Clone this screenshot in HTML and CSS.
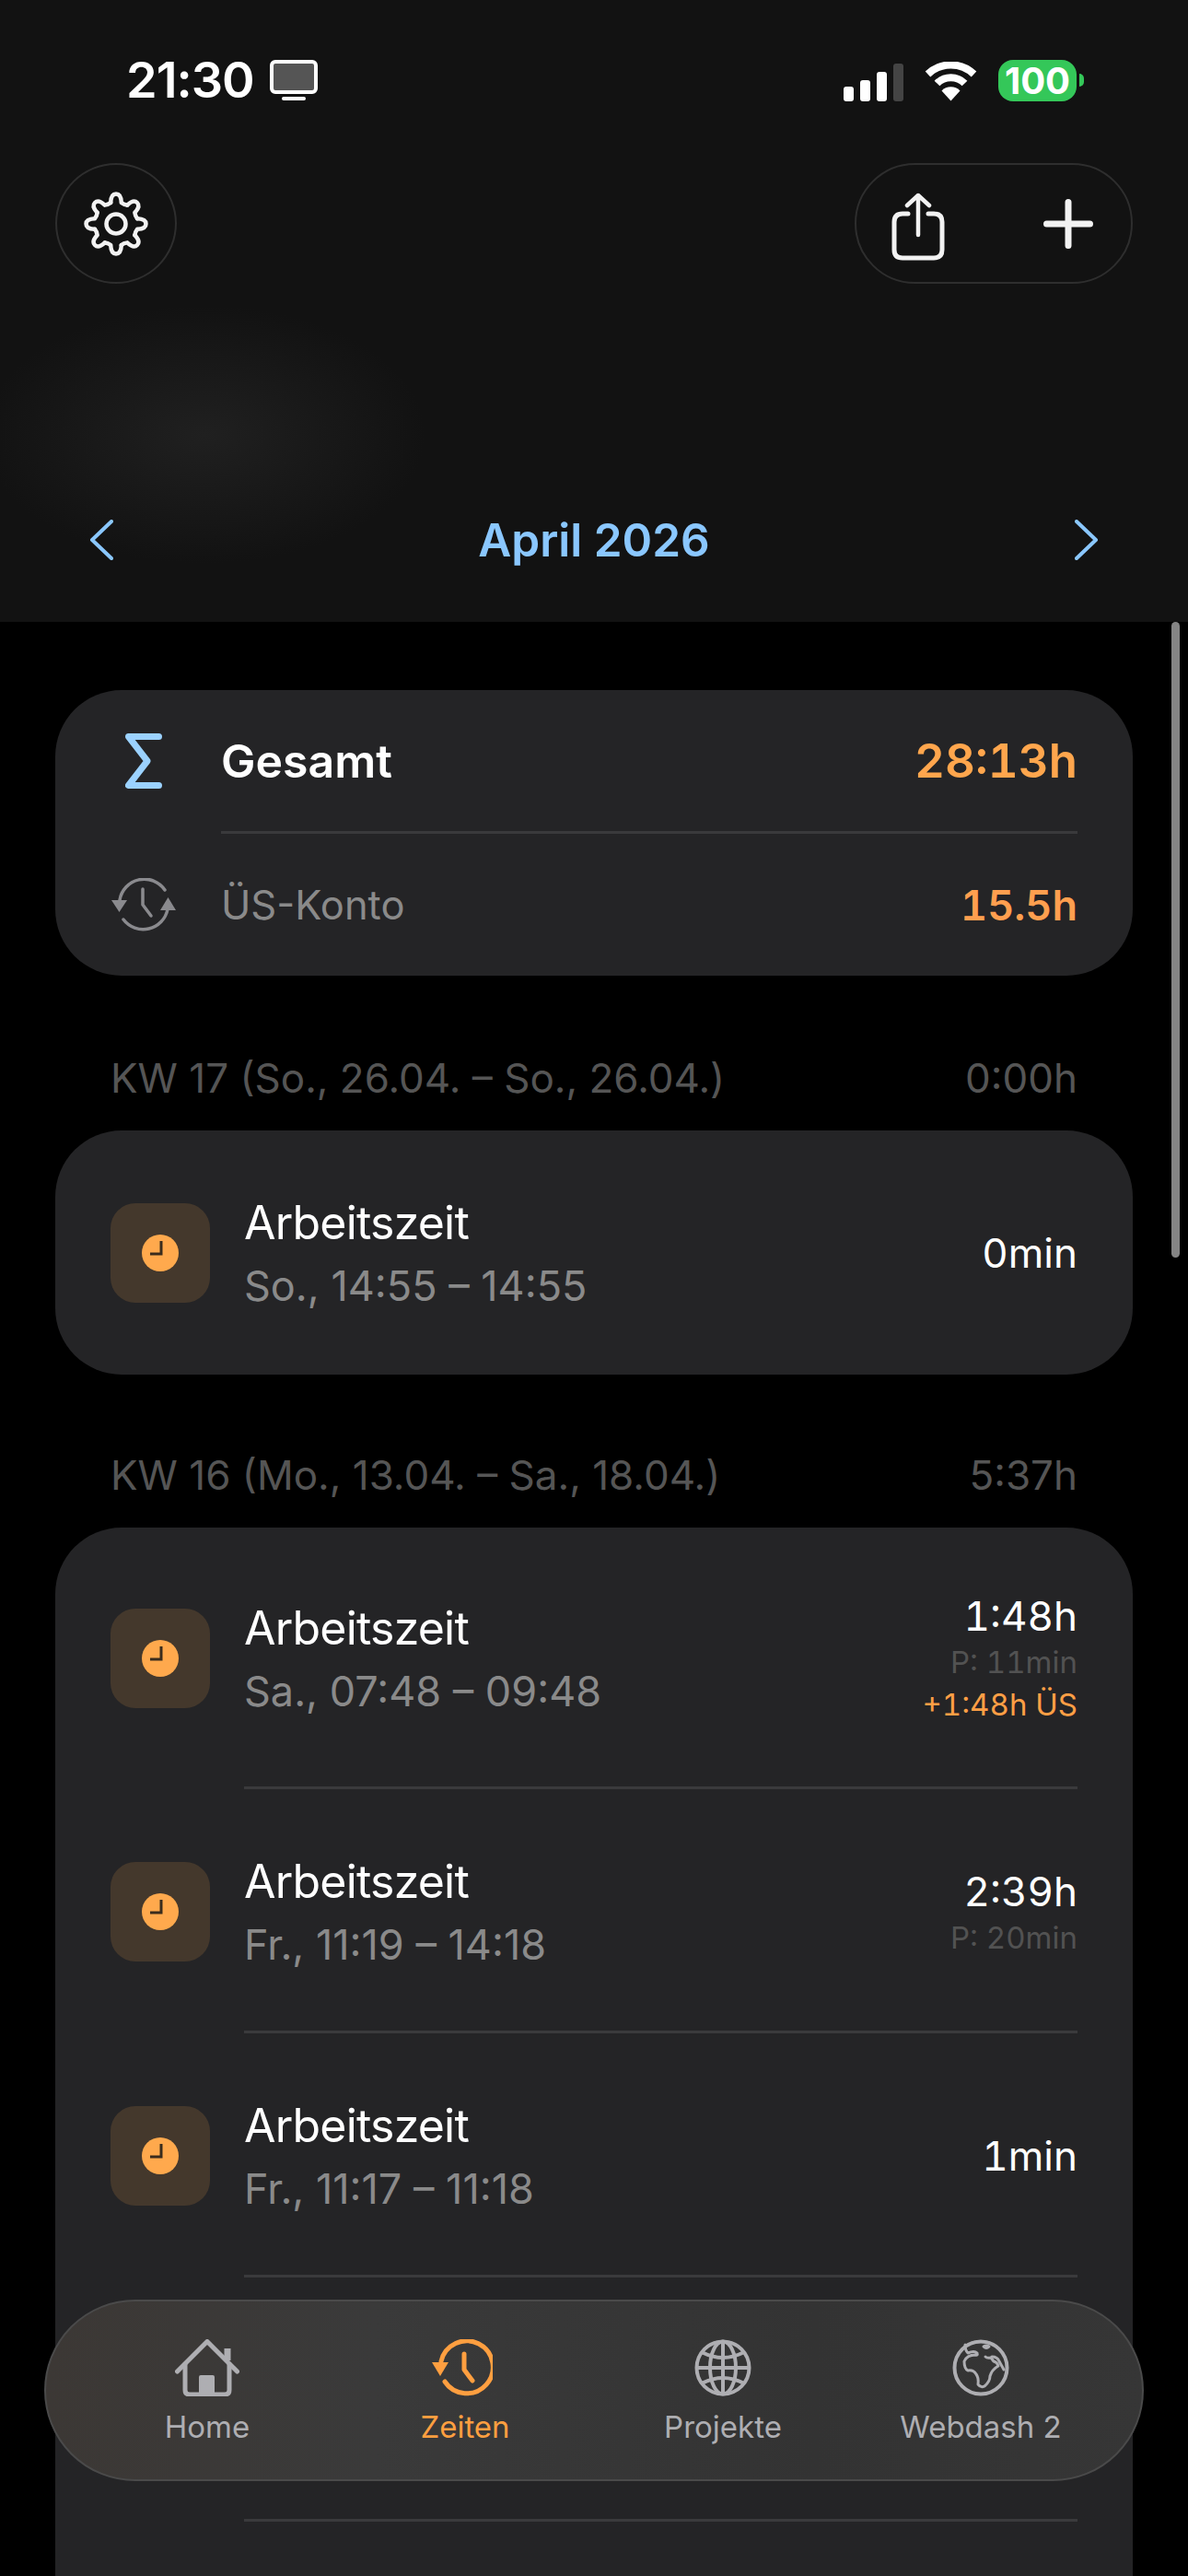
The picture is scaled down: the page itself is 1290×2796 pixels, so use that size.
FILE: index.html
```html
<!DOCTYPE html>
<html lang="de">
<head>
    <meta charset="UTF-8">
    <meta name="viewport" content="width=device-width, initial-scale=1.0">
    <title>Zeiten</title>
    <link rel="stylesheet" href="styles.css">
</head>
<body>
<div class="screen">
    <header class="top">
        <div class="status">
            <div class="status-left">
                <span class="clock">21:30</span>
                <svg class="monitor" width="52" height="45" viewBox="0 0 52 45">
                    <rect x="2" y="2" width="48" height="33" rx="4" fill="#555" stroke="#fff" stroke-width="4"/>
                    <rect x="13" y="40" width="26" height="4" rx="2" fill="#fff"/>
                </svg>
            </div>
            <div class="status-right">
                <div class="signal">
                    <i class="bar b1"></i><i class="bar b2"></i><i class="bar b3"></i><i class="bar b4"></i>
                </div>
                <svg class="wifi" width="57" height="43" viewBox="0 0 57 43" fill="none" stroke="#fff" stroke-width="8">
                    <path d="M3.500 13.500A36 36 0 0 1 53.500 13.500"/>
                    <path d="M13.500 23.500A21 21 0 0 1 43.500 23.500"/>
                    <path d="M28.500 42.500L18.500 31.500A14 14 0 0 1 38.500 31.500Z" fill="#fff" stroke="none"/>
                </svg>
                <div class="battery"><span class="battery-body">100</span><i class="battery-cap"></i></div>
            </div>
        </div>

        <div class="actions">
            <button class="glass round">
                <svg width="70" height="70" viewBox="-35 -35 70 70" fill="none" stroke="#f2f2f2" stroke-width="4.500" stroke-linejoin="round" stroke-linecap="round">
                    <g id="tooth"><path d="M-5.800 -23Q-5.500 -32.500 0 -32.500Q5.500 -32.500 5.800 -23Q9 -20.500 12.200 -20.400"/></g>
                    <use href="#tooth" transform="rotate(45)"/>
                    <use href="#tooth" transform="rotate(90)"/>
                    <use href="#tooth" transform="rotate(135)"/>
                    <use href="#tooth" transform="rotate(180)"/>
                    <use href="#tooth" transform="rotate(225)"/>
                    <use href="#tooth" transform="rotate(270)"/>
                    <use href="#tooth" transform="rotate(315)"/>
                    <circle r="10.500"/>
                </svg>
            </button>
            <div class="glass pill">
                <svg width="58" height="74" viewBox="0 0 58 74" fill="none" stroke="#f2f2f2" stroke-linecap="round" stroke-linejoin="round">
                    <path d="M18 23H12Q3 23 3 32V62Q3 71 12 71H46Q55 71 55 62V32Q55 23 46 23H40" stroke-width="5"/>
                    <path d="M29 46V3M17 14L29 3L41 14" stroke-width="4.500"/>
                </svg>
                <svg width="54" height="54" viewBox="0 0 54 54" fill="none" stroke="#f2f2f2" stroke-width="7" stroke-linecap="round">
                    <path d="M27 3.500V50.500M3.500 27H50.500"/>
                </svg>
            </div>
        </div>

        <div class="month-nav">
            <svg width="26" height="44" viewBox="0 0 26 44" fill="none" stroke="#8ac7ff" stroke-width="4" stroke-linecap="round" stroke-linejoin="round"><path d="M24 2L3 22L24 42"/></svg>
            <span class="month">April 2026</span>
            <svg width="26" height="44" viewBox="0 0 26 44" fill="none" stroke="#8ac7ff" stroke-width="4" stroke-linecap="round" stroke-linejoin="round"><path d="M2 2L23 22L2 42"/></svg>
        </div>
    </header>

    <main class="content">
        <section class="card sum-card">
            <div class="sum-row first">
                <div class="sum-icon">
                    <svg width="40" height="60" viewBox="0 0 40 60" fill="none" stroke="#9bd2ff" stroke-width="7" stroke-linecap="round" stroke-linejoin="round"><path d="M36.500 3.500H3.500L24 30L3.500 56.500H36.500"/></svg>
                </div>
                <span class="sum-label">Gesamt</span>
                <span class="sum-value">28:13h</span>
            </div>
            <div class="sum-divider"></div>
            <div class="sum-row">
                <div class="sum-icon">
                    <svg width="70" height="58" viewBox="0 0 70 58" fill="none" stroke="#8a8a8e" stroke-width="3.500" stroke-linecap="round" stroke-linejoin="round">
                        <path d="M9 24A27 27 0 0 1 58 13"/>
                        <path d="M61 34A27 27 0 0 1 13 45"/>
                        <path d="M34 12V29L43 41"/>
                        <path d="M0 24H17L8.500 37Z" fill="#8a8a8e" stroke="none"/>
                        <path d="M53 35H70L61.500 21Z" fill="#8a8a8e" stroke="none"/>
                    </svg>
                </div>
                <span class="sum-label muted">ÜS-Konto</span>
                <span class="sum-value small">15.5h</span>
            </div>
        </section>

        <div class="week first"><span>KW 17 (So., 26.04. – So., 26.04.)</span><span>0:00h</span></div>
        <section class="card">
            <div class="entry">
                <div class="tile"><svg width="40" height="40" viewBox="0 0 40 40"><circle cx="20" cy="20" r="20" fill="#ffa94d"/><path d="M21 7V21H9" fill="none" stroke="#3a2c1d" stroke-width="3"/></svg></div>
                <div class="entry-text"><div class="entry-title">Arbeitszeit</div><div class="entry-sub">So., 14:55 – 14:55</div></div>
                <div class="entry-side"><div class="entry-time">0min</div></div>
            </div>
        </section>

        <div class="week"><span>KW 16 (Mo., 13.04. – Sa., 18.04.)</span><span>5:37h</span></div>
        <section class="card open">
            <div class="entry tall">
                <div class="tile"><svg width="40" height="40" viewBox="0 0 40 40"><circle cx="20" cy="20" r="20" fill="#ffa94d"/><path d="M21 7V21H9" fill="none" stroke="#3a2c1d" stroke-width="3"/></svg></div>
                <div class="entry-text"><div class="entry-title">Arbeitszeit</div><div class="entry-sub">Sa., 07:48 – 09:48</div></div>
                <div class="entry-side"><div class="entry-time">1:48h</div><div class="entry-pause">P: 11min</div><div class="entry-extra">+1:48h ÜS</div></div>
            </div>
            <div class="entry">
                <div class="tile"><svg width="40" height="40" viewBox="0 0 40 40"><circle cx="20" cy="20" r="20" fill="#ffa94d"/><path d="M21 7V21H9" fill="none" stroke="#3a2c1d" stroke-width="3"/></svg></div>
                <div class="entry-text"><div class="entry-title">Arbeitszeit</div><div class="entry-sub">Fr., 11:19 – 14:18</div></div>
                <div class="entry-side"><div class="entry-time">2:39h</div><div class="entry-pause">P: 20min</div></div>
            </div>
            <div class="entry">
                <div class="tile"><svg width="40" height="40" viewBox="0 0 40 40"><circle cx="20" cy="20" r="20" fill="#ffa94d"/><path d="M21 7V21H9" fill="none" stroke="#3a2c1d" stroke-width="3"/></svg></div>
                <div class="entry-text"><div class="entry-title">Arbeitszeit</div><div class="entry-sub">Fr., 11:17 – 11:18</div></div>
                <div class="entry-side"><div class="entry-time">1min</div></div>
            </div>
            <div class="entry"></div>
        </section>
    </main>

    <div class="scrollbar"></div>

    <nav class="tabs">
        <div class="tab">
            <svg width="70" height="62" viewBox="0 0 70 62" fill="none" stroke="#aeaeb2" stroke-width="5" stroke-linecap="round" stroke-linejoin="round">
                <path d="M2.500 35L35 2.500L67.500 35"/>
                <path d="M11 27V55Q11 60 16 60H54Q59 60 59 55V27"/>
                <path d="M57 23V10" stroke-width="7" stroke-linecap="butt"/>
                <rect x="26" y="39" width="17" height="21" rx="2" fill="#aeaeb2" stroke="none"/>
            </svg>
            <span>Home</span>
        </div>
        <div class="tab active">
            <svg width="66" height="62" viewBox="0 0 66 62" fill="none" stroke="#ff9f40" stroke-width="5" stroke-linecap="round" stroke-linejoin="round">
                <path d="M10 24A28.500 28.500 0 1 1 14 46"/>
                <path d="M35 16V33L44 45"/>
                <path d="M0 25H18L9 40Z" fill="#ff9f40" stroke="none"/>
            </svg>
            <span>Zeiten</span>
        </div>
        <div class="tab">
            <svg width="62" height="62" viewBox="0 0 62 62" fill="none" stroke="#aeaeb2" stroke-width="4">
                <circle cx="31" cy="31" r="28.500"/>
                <ellipse cx="31" cy="31" rx="14" ry="28.500"/>
                <path d="M31 2.500V59.500M2.500 31H59.500"/>
                <path d="M8 14Q31 26 54 14M8 48Q31 36 54 48"/>
            </svg>
            <span>Projekte</span>
        </div>
        <div class="tab">
            <svg width="62" height="62" viewBox="0 0 62 62" fill="none" stroke="#aeaeb2" stroke-width="3" stroke-linejoin="round" stroke-linecap="round">
                <circle cx="31" cy="31" r="28.500" stroke-width="4"/>
                <path d="M14 6Q14 12 17 15Q24 12 27 15Q28 18 25 17Q16 17 13 24Q13 32 17 34Q23 33 26 38Q29 42 28 49Q31 53 35 51Q41 46 41 40Q43 33 50 29Q49 25 45 24L42 20Q38 21 36 19"/>
                <path d="M34 8Q37 6 40 8Q37 11 34 8Z"/>
                <path d="M43 19Q49 19 51 24L56 33"/>
            </svg>
            <span>Webdash 2</span>
        </div>
    </nav>
</div>
</body>
</html>
```

FILE: styles.css
```css
* {
    box-sizing: border-box;
}
body {
    margin: 0;
    background-color: #000;
    font-family: Inter, "Noto Sans", sans-serif;
    color: #fff;
}
.screen {
    position: relative;
    width: 1290px;
    height: 2796px;
    overflow: hidden;
    background-color: #000;
}
svg {
    display: block;
    flex: none;
}

/* header */
.top {
    height: 675px;
    padding: 64px 60px 0;
    background-color: #121212;
    background-image: radial-gradient(ellipse 240px 140px at 222px 472px, #202020, rgba(32, 32, 32, 0));
}
.status {
    display: flex;
    justify-content: space-between;
    align-items: center;
    height: 46px;
    padding: 0 53px 0 77px;
}
.status-left {
    display: flex;
    align-items: center;
    gap: 17px;
}
.clock {
    font-size: 54px;
    font-weight: 600;
    line-height: 46px;
    letter-spacing: -1px;
}
.status-right {
    display: flex;
    align-items: center;
}
.signal {
    display: flex;
    align-items: flex-end;
    gap: 7px;
    height: 41px;
    margin-top: 4px;
}
.bar {
    width: 11px;
    border-radius: 3px;
    background-color: #fff;
}
.b1 { height: 16px; }
.b2 { height: 23px; }
.b3 { height: 32px; }
.b4 { height: 41px; background-color: #444; }
.wifi {
    margin-left: 23px;
    margin-top: 2px;
}
.battery {
    display: flex;
    align-items: center;
    margin-left: 23px;
}
.battery-body {
    width: 85px;
    height: 45px;
    border-radius: 16px;
    background-color: #34c759;
    font-size: 40px;
    font-weight: 700;
    line-height: 45px;
    text-align: center;
}
.battery-cap {
    width: 5px;
    height: 14px;
    margin-left: 3px;
    border-radius: 0 5px 5px 0;
    background-color: #34c759;
}

.actions {
    display: flex;
    justify-content: space-between;
    margin-top: 67px;
}
.glass {
    display: flex;
    align-items: center;
    height: 131px;
    border: 2px solid #2e2e2e;
    background: none;
}
.round {
    justify-content: center;
    width: 132px;
    padding: 0;
    border-radius: 50%;
}
.pill {
    width: 302px;
    padding: 0 41px 0 38px;
    justify-content: space-between;
    border-radius: 66px;
}
.pill svg:first-child {
    margin-top: 6px;
}

.month-nav {
    display: flex;
    justify-content: space-between;
    align-items: center;
    height: 60px;
    margin-top: 248px;
    padding: 0 37px;
}
.month {
    font-size: 49.500px;
    font-weight: 600;
    color: #8ac7ff;
}

/* list */
.content {
    padding: 74px 60px 0;
}
.card {
    border-radius: 72px;
    background-color: #242426;
}
.card.open {
    padding-bottom: 100px;
    border-radius: 72px 72px 0 0;
}
.sum-card {
    height: 310px;
    padding: 0 60px;
}
.sum-row {
    display: flex;
    align-items: center;
    height: 154px;
}
.sum-row.first {
    height: 153px;
}
.sum-icon {
    display: flex;
    justify-content: center;
    width: 72px;
    margin-right: 48px;
}
.sum-label {
    flex: 1;
    font-size: 50px;
    font-weight: 600;
}
.sum-label.muted {
    font-size: 43.500px;
    font-weight: 400;
    color: #8a8a8a;
}
.sum-value {
    font-size: 51px;
    font-weight: 600;
    font-variant-numeric: tabular-nums;
    color: #ffa64d;
}
.sum-value.small {
    font-size: 45px;
    color: #ff9f4f;
}
.sum-divider {
    height: 3px;
    margin-left: 120px;
    background-color: #3a3a3c;
}
.week {
    display: flex;
    justify-content: space-between;
    height: 54px;
    margin: 82px 0 30px;
    padding: 0 60px;
    font-size: 44px;
    line-height: 54px;
    color: #555;
}
.week.first {
    margin-top: 84px;
}
.entry {
    display: flex;
    align-items: center;
    height: 265px;
    padding: 0 60px;
}
.card.open .entry {
    padding-top: 3px;
    border-bottom: 3px solid transparent;
    background-image: linear-gradient(#3a3a3c, #3a3a3c);
    background-size: 905px 3px;
    background-position: 205px 100%;
    background-repeat: no-repeat;
    background-origin: border-box;
}
.card.open .entry.tall {
    height: 284px;
}
.tile {
    display: flex;
    justify-content: center;
    align-items: center;
    width: 108px;
    height: 108px;
    margin-right: 37px;
    border-radius: 27px;
    background-color: #44382c;
}
.entry-text {
    flex: 1;
}
.entry-title {
    font-size: 50px;
    line-height: 60px;
    letter-spacing: -0.800px;
}
.entry-sub {
    margin-top: 12px;
    font-size: 45px;
    line-height: 54px;
    color: #8a8a8a;
}
.entry-side {
    font-variant-numeric: tabular-nums;
    text-align: right;
}
.entry-time {
    font-size: 44px;
    line-height: 56px;
}
.entry-pause {
    font-size: 33px;
    line-height: 44px;
    color: #525252;
}
.entry-extra {
    font-size: 33px;
    line-height: 48px;
    color: #ff9f45;
}

/* overlays */
.scrollbar {
    position: absolute;
    top: 675px;
    left: 1272px;
    width: 9px;
    height: 690px;
    border-radius: 5px;
    background-color: #858585;
}
.tabs {
    position: absolute;
    left: 48px;
    top: 2496px;
    display: grid;
    grid-template-columns: repeat(4, 280px);
    justify-content: center;
    width: 1194px;
    height: 197px;
    padding-top: 41px;
    border: 2px solid #4a4a4a;
    border-radius: 99px;
    background: linear-gradient(90deg, #3c3835, #3a3a3a 30%, #333 70%, #363636);
}
.tab {
    display: flex;
    flex-direction: column;
    align-items: center;
    font-size: 33px;
    line-height: 44px;
    color: #aeaeb2;
}
.tab span {
    margin-top: 11px;
}
.tab.active {
    color: #ff9f40;
}
.tab.active svg {
    margin-left: -7px;
}
```
